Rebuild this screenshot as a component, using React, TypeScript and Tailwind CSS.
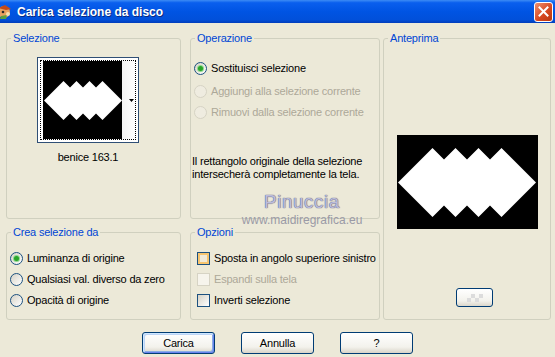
import React from "react"

const font = { fontFamily: '"Liberation Sans", Arial, sans-serif' }

function Shape({ w, h }: { w: number; h: number }) {
  // four overlapping 45° diamonds
  return (
    <svg width={w} height={h} viewBox="0 0 138 69">
      <polygon
        fill="#fff"
        points="0,34.5 34.5,0 46,11.5 57.5,0 69,11.5 80.5,0 92,11.5 103.5,0 138,34.5 103.5,69 92,57.5 80.5,69 69,57.5 57.5,69 46,57.5 34.5,69"
      />
    </svg>
  )
}

function Radio({ label, checked, disabled }: { label: string; checked?: boolean; disabled?: boolean }) {
  return (
    <div className="flex items-center h-[16px] gap-[4px]">
      <div
        className={
          disabled
            ? "w-[13px] h-[13px] rounded-full border border-[#d6d3c4] bg-[#efece0]"
            : "w-[13px] h-[13px] rounded-full border border-[#1c5180] bg-[linear-gradient(135deg,#d6d2c6,#ffffff)] flex items-center justify-center"
        }
      >
        {checked && <div className="w-[5px] h-[5px] rounded-full bg-[#2aa52a] shadow-[0_0_0_1px_#8fd88f]" />}
      </div>
      <span className={disabled ? "text-[#aca899]" : "text-black"}>{label}</span>
    </div>
  )
}

function Check({ label, kind }: { label: string; kind: "hover" | "disabled" | "normal" }) {
  const box =
    kind === "hover"
      ? "w-[13px] h-[13px] border border-[#1c5180] bg-[#f1ead8] shadow-[inset_0_0_0_2px_#f7c56f]"
      : kind === "disabled"
      ? "w-[13px] h-[13px] border border-[#d6d3c4] bg-[#f6f4ec]"
      : "w-[13px] h-[13px] border border-[#1c5180] bg-[linear-gradient(135deg,#d6d2c6,#ffffff)]"
  return (
    <div className="flex items-center h-[16px] gap-[4px]">
      <div className={box} />
      <span className={kind === "disabled" ? "text-[#aca899]" : "text-black"}>{label}</span>
    </div>
  )
}

function Group({ title, className, children }: { title: string; className: string; children?: React.ReactNode }) {
  return (
    <fieldset className={`border border-[#d0d0bf] rounded-[3px] min-w-0 ${className}`}>
      <legend className="ml-[4px] px-[2px] leading-[14px] text-[#0046d5]">{title}</legend>
      {children}
    </fieldset>
  )
}

function Button({ label, primary }: { label: string; primary?: boolean }) {
  return (
    <button
      className={
        "w-[73px] h-[22px] rounded-[3px] border border-[#003c74] text-black bg-[linear-gradient(to_bottom,#ffffff,#f3f2ec_70%,#d9d4c8)] " +
        (primary
          ? "shadow-[inset_1px_1px_0_#cee7ff,inset_-1px_-1px_0_#6982ee,inset_2px_2px_0_#bcd4f6,inset_-2px_-2px_0_#89ade4]"
          : "")
      }
    >
      {label}
    </button>
  )
}

export default function App() {
  return (
    <div className="w-[555px] h-[357px] bg-[#ece9d8] relative overflow-hidden text-[11px] tracking-[-0.2px]" style={font}>
      {/* Title bar */}
      <div className="h-[23px] flex items-center bg-[linear-gradient(to_bottom,#3d8cf5_0%,#0a5fee_12%,#0054e3_50%,#0150da_85%,#003dbb_100%)]">
        <svg width="14" height="16" viewBox="0 0 14 16" className="ml-[-2px]">
          <circle cx="6" cy="8" r="6" fill="#e8a060" />
          <path d="M0 4 L7 1 L13 5 L8 6 Z" fill="#c24a1a" />
          <circle cx="5" cy="8" r="1.3" fill="#2a2a2a" />
          <path d="M3 12 L9 11 L8 15 L2 15 Z" fill="#5aa040" />
          <circle cx="10" cy="10" r="2" fill="#f5e0b0" />
        </svg>
        <span className="ml-[5px] text-white font-bold text-[12px] tracking-normal [text-shadow:1px_1px_0_#0a2a80]">
          Carica selezione da disco
        </span>
        <div className="ml-auto mr-[2px] w-[19px] h-[20px] rounded-[3px] border border-white bg-[linear-gradient(135deg,#ef9070,#d5451d_60%,#b83810)] flex items-center justify-center">
          <svg width="11" height="11" viewBox="0 0 11 11">
            <path d="M1.5 1.5 L9.5 9.5 M9.5 1.5 L1.5 9.5" stroke="#fff" strokeWidth="2" strokeLinecap="square" />
          </svg>
        </div>
      </div>

      {/* Body */}
      <div className="flex pt-[8px] pl-[6px]">
        <div className="flex flex-col gap-[6px] w-[175px]">
          <Group title="Selezione" className="h-[188px]">
            <div className="ml-[30px] w-[102px] mt-[12px] flex flex-col items-center">
              <div className="w-[102px] h-[86px] border border-[#2f4f75] bg-white p-[2px]">
                <div className="w-full h-full border border-dotted border-black flex">
                  <div className="ml-[2px] w-[79px] bg-black flex items-center justify-center">
                    <Shape w={78} h={39} />
                  </div>
                  <div className="flex-1 bg-[linear-gradient(to_right,#f4f4f4,#ffffff)] flex items-center justify-end pr-[1px]">
                    <svg width="5" height="3" viewBox="0 0 5 3">
                      <path d="M0 0 L5 0 L2.5 3 Z" fill="#000" />
                    </svg>
                  </div>
                </div>
              </div>
              <div className="mt-[8px] leading-[13px] text-black">benice 163.1</div>
            </div>
          </Group>
          <Group title="Crea selezione da" className="h-[95px]">
            <div className="pl-[3px] pt-[11px] flex flex-col gap-[5px]">
              <Radio label="Luminanza di origine" checked />
              <Radio label="Qualsiasi val. diverso da zero" />
              <Radio label="Opacità di origine" />
            </div>
          </Group>
        </div>

        <div className="flex flex-col gap-[6px] w-[190px] ml-[9px]">
          <Group title="Operazione" className="h-[188px]">
            <div className="pl-[3px] pt-[15px] flex flex-col">
              <Radio label="Sostituisci selezione" checked />
              <div className="mt-[7px]">
                <Radio label="Aggiungi alla selezione corrente" disabled />
              </div>
              <div className="mt-[5px]">
                <Radio label="Rimuovi dalla selezione corrente" disabled />
              </div>
            </div>
            <div className="pl-[1px] mt-[35px] leading-[12.5px] text-black">
              Il rettangolo originale della selezione
              <br />
              intersecherà completamente la tela.
            </div>
          </Group>
          <Group title="Opzioni" className="h-[95px]">
            <div className="pl-[6px] pt-[11px] flex flex-col gap-[5px]">
              <Check label="Sposta in angolo superiore sinistro" kind="hover" />
              <Check label="Espandi sulla tela" kind="disabled" />
              <Check label="Inverti selezione" kind="normal" />
            </div>
          </Group>
        </div>

        <Group title="Anteprima" className="w-[168px] h-[289px] ml-[3px]">
          <div className="flex flex-col">
            <div className="mt-[90px] self-center w-[141px] h-[94px] bg-black flex items-center justify-center">
              <Shape w={138} h={69} />
            </div>
            <div className="mt-[59px] ml-[72px] w-[37px] h-[19px] rounded-[3px] border border-[#003c74] bg-[linear-gradient(to_bottom,#ffffff,#f3f2ec_70%,#dcd7cb)] flex items-center justify-center">
              <svg width="16" height="8" viewBox="0 0 16 8">
                <rect x="0" y="4" width="4" height="4" fill="#dcdcdc" />
                <rect x="4" y="0" width="4" height="4" fill="#dcdcdc" />
                <rect x="8" y="4" width="4" height="4" fill="#dcdcdc" />
                <rect x="12" y="0" width="4" height="4" fill="#dcdcdc" />
              </svg>
            </div>
          </div>
        </Group>
      </div>

      {/* Buttons */}
      <div className="flex justify-center gap-[26px] mt-[12px]">
        <Button label="Carica" primary />
        <Button label="Annulla" />
        <Button label="?" />
      </div>

      {/* Watermark */}
      <div className="absolute left-[241px] top-[192px] w-[122px] flex flex-col items-center pointer-events-none tracking-normal">
        <span className="text-[19px] leading-[20px] tracking-[0.5px] text-[#bcbcdc] [text-shadow:0_0_1px_#5e5e80,0_0_1px_#5e5e80]">
          Pinuccia
        </span>
        <span className="mt-[2px] text-[12px] leading-[12px] text-[#9a9aa6]">www.maidiregrafica.eu</span>
      </div>
    </div>
  )
}
